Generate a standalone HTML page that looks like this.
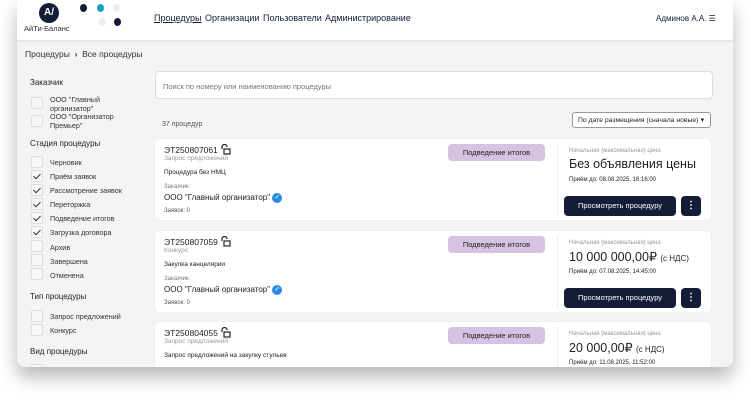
<!DOCTYPE html>
<html><head><meta charset="utf-8"><style>
*{box-sizing:border-box;margin:0;padding:0}
body{width:751px;height:403px;background:#fff;font-family:"Liberation Sans",sans-serif;color:#222;position:relative;overflow:hidden}
.win{position:absolute;left:17px;top:0;width:716px;height:367px;background:#f4f4f4;border-radius:0 0 8px 8px;overflow:hidden;box-shadow:0 10px 18px rgba(0,0,0,.28)}
.hdr{position:absolute;left:0;top:0;width:716px;height:40px;background:#fff;box-shadow:0 1px 3px rgba(0,0,0,.1)}
.a{position:absolute;white-space:nowrap}
.cb{position:absolute;width:12px;height:12px;border:1px solid #ddd;border-radius:2px;background:#f7f7f7}
.cb.on::after{content:"";position:absolute;left:3px;top:1px;width:3px;height:6px;border:solid #333;border-width:0 1px 1px 0;transform:rotate(45deg)}
.sl{font-size:7.2px;color:#333}
.sh{font-size:8px;color:#222}
.card{position:absolute;left:138px;width:556px;height:81px;background:#fff;border-radius:5px;box-shadow:0 0 2px rgba(0,0,0,.06)}
.pill{position:absolute;left:293px;top:5px;width:97px;height:17px;background:#d6c2e2;border-radius:4px;font-size:7.5px;text-align:center;line-height:17px;color:#222}
.div{position:absolute;left:402px;top:5px;width:1px;height:72px;background:#eee}
.btn{position:absolute;left:409px;top:57px;width:112px;height:20px;background:#141d38;border-radius:4px;color:#fff;font-size:7.5px;text-align:center;line-height:20px}
.keb{position:absolute;left:526px;top:57px;width:20px;height:20px;background:#141d38;border-radius:4px;color:#fff;font-size:10px;text-align:center;line-height:20px;font-weight:bold}
.lk{display:inline-block;vertical-align:-2px;margin-left:2px}
</style></head><body>
<div class="win">
<div class="hdr">
 <div class="a" style="left:22px;top:3px;width:20px;height:20px;border-radius:50%;background:#141d38;color:#fff;font-size:10px;text-align:center;line-height:20px;font-weight:bold">A/</div>
 <div class="a" style="left:7px;top:24px;font-size:7.5px;color:#333">АйТи-Баланс</div>
 <div class="a" style="left:63px;top:4px;width:7px;height:8px;border-radius:50%;background:#141d38"></div>
 <div class="a" style="left:80px;top:4px;width:7px;height:8px;border-radius:50%;background:#1aa0c8"></div>
 <div class="a" style="left:96px;top:4px;width:7px;height:8px;border-radius:50%;background:#eee"></div>
 <div class="a" style="left:82px;top:18px;width:7px;height:8px;border-radius:50%;background:#eee"></div>
 <div class="a" style="left:97px;top:18px;width:7px;height:8px;border-radius:50%;background:#141d38"></div>
 <div class="a" style="left:137px;top:13px;font-size:9px;color:#141d38;text-decoration:underline">Процедуры</div>
 <div class="a" style="left:188px;top:13px;font-size:9px;color:#141d38">Организации</div>
 <div class="a" style="left:246px;top:13px;font-size:9px;color:#141d38">Пользователи</div>
 <div class="a" style="left:308px;top:13px;font-size:9px;color:#141d38">Администрирование</div>
 <div class="a" style="left:639px;top:14px;font-size:8px;color:#141d38">Админов А.А. ☰</div>
</div>
<div class="a" style="left:8px;top:49px;font-size:8.5px;color:#333">Процедуры &nbsp;<b>›</b>&nbsp; Все процедуры</div>
<div class="a sh" style="left:13px;top:78px">Заказчик</div>
<div class="cb" style="left:14px;top:97px"></div><div class="a sl" style="left:33px;top:95px;line-height:9px">ООО "Главный<br>организатор"</div>
<div class="cb" style="left:14px;top:115px"></div><div class="a sl" style="left:33px;top:112px;line-height:9px">ООО "Организатор<br>Премьер"</div>
<div class="a sh" style="left:13px;top:139px">Стадия процедуры</div>
<div class="cb" style="left:14px;top:156px"></div><div class="a sl" style="left:33px;top:158px">Черновик</div>
<div class="cb on" style="left:14px;top:170px"></div><div class="a sl" style="left:33px;top:172px">Приём заявок</div>
<div class="cb on" style="left:14px;top:184px"></div><div class="a sl" style="left:33px;top:186px">Рассмотрение заявок</div>
<div class="cb on" style="left:14px;top:198px"></div><div class="a sl" style="left:33px;top:200px">Переторжка</div>
<div class="cb on" style="left:14px;top:212px"></div><div class="a sl" style="left:33px;top:214px">Подведение итогов</div>
<div class="cb on" style="left:14px;top:226px"></div><div class="a sl" style="left:33px;top:228px">Загрузка договора</div>
<div class="cb" style="left:14px;top:240px"></div><div class="a sl" style="left:33px;top:243px">Архив</div>
<div class="cb" style="left:14px;top:254px"></div><div class="a sl" style="left:33px;top:257px">Завершена</div>
<div class="cb" style="left:14px;top:268px"></div><div class="a sl" style="left:33px;top:271px">Отменена</div>
<div class="a sh" style="left:13px;top:292px">Тип процедуры</div>
<div class="cb" style="left:14px;top:310px"></div><div class="a sl" style="left:33px;top:312px">Запрос предложений</div>
<div class="cb" style="left:14px;top:324px"></div><div class="a sl" style="left:33px;top:326px">Конкурс</div>
<div class="a sh" style="left:13px;top:347px">Вид процедуры</div>
<div class="cb" style="left:14px;top:364px"></div>

<div class="a" style="left:138px;top:71px;width:558px;height:28px;background:#fff;border:1px solid #ddd;border-radius:4px;font-size:7.5px;color:#777;padding:10px 7px">Поиск по номеру или наименованию процедуры</div>
<div class="a" style="left:145px;top:121px;font-size:7px;color:#555">37 процедур</div>
<div class="a" style="left:555px;top:112px;width:139px;height:16px;background:#fff;border:1px solid #999;border-radius:3px;font-size:6.8px;color:#222;padding:4px 5px">По дате размещения (сначала новые) <span style="position:absolute;right:6px;top:3px">▾</span></div>

<div class="card" style="top:139px">
 <div class="a" style="left:9px;top:5px;font-size:8.5px">ЭТ250807061<svg class="lk" width="11" height="11" viewBox="0 0 11 11"><path d="M2 5V3a2.5 2.5 0 0 1 5 0" fill="none" stroke="#222" stroke-width="1.2"/><rect x="4" y="5" width="6" height="5" fill="none" stroke="#222" stroke-width="1.2"/></svg></div>
 <div class="a" style="left:9px;top:16px;font-size:6.5px;color:#999">Запрос предложений</div>
 <div class="a" style="left:9px;top:30px;font-size:6.5px">Процедура без НМЦ</div>
 <div class="a" style="left:9px;top:45px;font-size:6px;color:#777">Заказчик:</div>
 <div class="a" style="left:9px;top:54px;font-size:8px">ООО "Главный организатор" <span style="display:inline-block;width:10px;height:10px;border-radius:50%;background:#2a8be6;color:#fff;font-size:7px;text-align:center;line-height:10px;vertical-align:middle">✓</span></div>
 <div class="a" style="left:9px;top:69px;font-size:6px;color:#555">Заявок: 0</div>
 <div class="pill">Подведение итогов</div><div class="div"></div>
 <div class="a" style="left:414px;top:9px;font-size:6px;color:#999">Начальная (максимальная) цена</div>
 <div class="a" style="left:414px;top:18px;font-size:12.5px;color:#222">Без объявления цены</div>
 <div class="a" style="left:414px;top:38px;font-size:6px">Приём до: 08.08.2025, 16:16:00</div>
 <div class="btn">Просмотреть процедуру</div><div class="keb">⋮</div>
</div>
<div class="card" style="top:231px">
 <div class="a" style="left:9px;top:5px;font-size:8.5px">ЭТ250807059<svg class="lk" width="11" height="11" viewBox="0 0 11 11"><path d="M2 5V3a2.5 2.5 0 0 1 5 0" fill="none" stroke="#222" stroke-width="1.2"/><rect x="4" y="5" width="6" height="5" fill="none" stroke="#222" stroke-width="1.2"/></svg></div>
 <div class="a" style="left:9px;top:16px;font-size:6.5px;color:#999">Конкурс</div>
 <div class="a" style="left:9px;top:30px;font-size:6.5px">Закупка канцелярии</div>
 <div class="a" style="left:9px;top:45px;font-size:6px;color:#777">Заказчик:</div>
 <div class="a" style="left:9px;top:54px;font-size:8px">ООО "Главный организатор" <span style="display:inline-block;width:10px;height:10px;border-radius:50%;background:#2a8be6;color:#fff;font-size:7px;text-align:center;line-height:10px;vertical-align:middle">✓</span></div>
 <div class="a" style="left:9px;top:69px;font-size:6px;color:#555">Заявок: 0</div>
 <div class="pill">Подведение итогов</div><div class="div"></div>
 <div class="a" style="left:414px;top:9px;font-size:6px;color:#999">Начальная (максимальная) цена</div>
 <div class="a" style="left:414px;top:18px;font-size:12.5px;color:#222">10 000 000,00₽ <span style="font-size:8px">(с НДС)</span></div>
 <div class="a" style="left:414px;top:38px;font-size:6px">Приём до: 07.08.2025, 14:45:00</div>
 <div class="btn">Просмотреть процедуру</div><div class="keb">⋮</div>
</div>
<div class="card" style="top:322px">
 <div class="a" style="left:9px;top:5px;font-size:8.5px">ЭТ250804055<svg class="lk" width="11" height="11" viewBox="0 0 11 11"><path d="M2 5V3a2.5 2.5 0 0 1 5 0" fill="none" stroke="#222" stroke-width="1.2"/><rect x="4" y="5" width="6" height="5" fill="none" stroke="#222" stroke-width="1.2"/></svg></div>
 <div class="a" style="left:9px;top:16px;font-size:6.5px;color:#999">Запрос предложений</div>
 <div class="a" style="left:9px;top:30px;font-size:6.5px">Запрос предложений на закупку стульев</div>
 <div class="pill">Подведение итогов</div><div class="div"></div>
 <div class="a" style="left:414px;top:9px;font-size:6px;color:#999">Начальная (максимальная) цена</div>
 <div class="a" style="left:414px;top:18px;font-size:12.5px;color:#222">20 000,00₽ <span style="font-size:8px">(с НДС)</span></div>
 <div class="a" style="left:414px;top:38px;font-size:6px">Приём до: 11.08.2025, 11:52:00</div>
</div>
</div>
</body></html>
